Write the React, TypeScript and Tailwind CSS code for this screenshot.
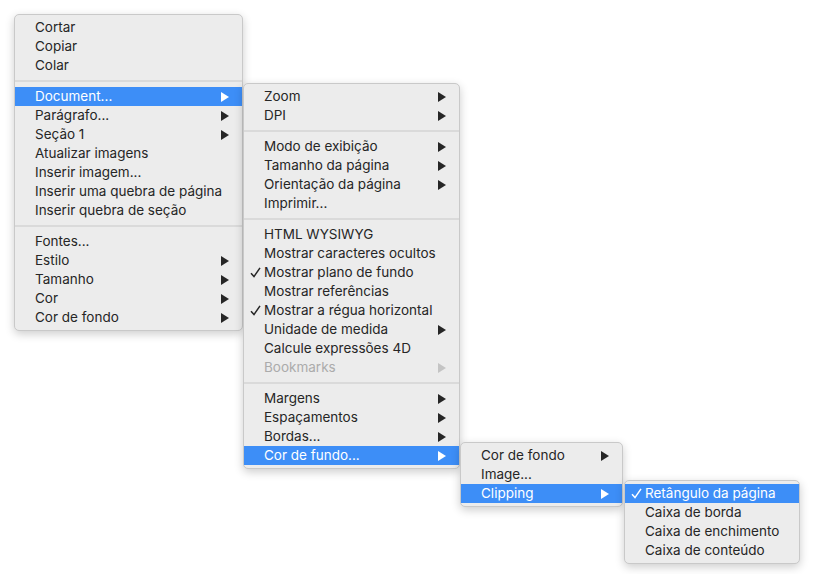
type Item =
  | { sep: true }
  | { label: string; sub?: boolean; checked?: boolean; active?: boolean; disabled?: boolean };

const menu1: Item[] = [
  { label: "Cortar" },
  { label: "Copiar" },
  { label: "Colar" },
  { sep: true },
  { label: "Document...", sub: true, active: true },
  { label: "Parágrafo...", sub: true },
  { label: "Seção 1", sub: true },
  { label: "Atualizar imagens" },
  { label: "Inserir imagem..." },
  { label: "Inserir uma quebra de página" },
  { label: "Inserir quebra de seção" },
  { sep: true },
  { label: "Fontes..." },
  { label: "Estilo", sub: true },
  { label: "Tamanho", sub: true },
  { label: "Cor", sub: true },
  { label: "Cor de fondo", sub: true },
];

const menu2: Item[] = [
  { label: "Zoom", sub: true },
  { label: "DPI", sub: true },
  { sep: true },
  { label: "Modo de exibição", sub: true },
  { label: "Tamanho da página", sub: true },
  { label: "Orientação da página", sub: true },
  { label: "Imprimir..." },
  { sep: true },
  { label: "HTML WYSIWYG" },
  { label: "Mostrar caracteres ocultos" },
  { label: "Mostrar plano de fundo", checked: true },
  { label: "Mostrar referências" },
  { label: "Mostrar a régua horizontal", checked: true },
  { label: "Unidade de medida", sub: true },
  { label: "Calcule expressões 4D" },
  { label: "Bookmarks", sub: true, disabled: true },
  { sep: true },
  { label: "Margens", sub: true },
  { label: "Espaçamentos", sub: true },
  { label: "Bordas...", sub: true },
  { label: "Cor de fundo...", sub: true, active: true },
];

const menu3: Item[] = [
  { label: "Cor de fondo", sub: true },
  { label: "Image..." },
  { label: "Clipping", sub: true, active: true },
];

const menu4: Item[] = [
  { label: "Retângulo da página", checked: true, active: true },
  { label: "Caixa de borda" },
  { label: "Caixa de enchimento" },
  { label: "Caixa de conteúdo" },
];

function Arrow({ color }: { color: string }) {
  return (
    <svg width="8" height="10" viewBox="0 0 8 10" className="shrink-0">
      <polygon points="0,0 8,5 0,10" fill={color} />
    </svg>
  );
}

function Check({ color }: { color: string }) {
  return (
    <svg width="11" height="11" viewBox="0 0 11 11">
      <path d="M1 6.2 L4 9.6 L10 0.8" fill="none" stroke={color} strokeWidth="1.5" />
    </svg>
  );
}

function Menu({ items, className }: { items: Item[]; className: string }) {
  return (
    <div
      className={
        "absolute flex flex-col rounded-[5px] bg-[#ececec] border border-[#c9c9c9] py-[3px] shadow-[0_3px_10px_rgba(0,0,0,0.2)] " +
        className
      }
    >
      {items.map((it, i) => {
        if ("sep" in it) {
          return (
            <div key={i} className="h-[12px] flex items-center">
              <div className="h-[2px] w-full bg-[#dadada]" />
            </div>
          );
        }
        const color = it.active ? "#ffffff" : it.disabled ? "#ababab" : "#262626";
        return (
          <div
            key={i}
            className={
              "flex items-center h-[19px] pr-[13px] whitespace-nowrap " +
              (it.active ? "bg-[#3d8ef7] text-white" : it.disabled ? "text-[#ababab]" : "text-[#262626]")
            }
          >
            <div className="w-[20px] shrink-0 pl-[6px] flex items-center">
              {it.checked && <Check color={color} />}
            </div>
            <span className="flex-1 pr-6">{it.label}</span>
            {it.sub && <Arrow color={it.disabled ? "#c4c4c4" : color} />}
          </div>
        );
      })}
    </div>
  );
}

export default function App() {
  return (
    <div
      className="relative w-[814px] h-[574px] bg-white overflow-hidden text-[13.5px]"
      style={{ fontFamily: "Inter, 'Noto Sans', sans-serif" }}
    >
      <Menu items={menu1} className="left-[14px] top-[14px] w-[229px]" />
      <Menu items={menu2} className="left-[243px] top-[83px] w-[217px]" />
      <Menu items={menu3} className="left-[460px] top-[442px] w-[163px]" />
      <Menu items={menu4} className="left-[624px] top-[480px] w-[176px]" />
    </div>
  );
}
